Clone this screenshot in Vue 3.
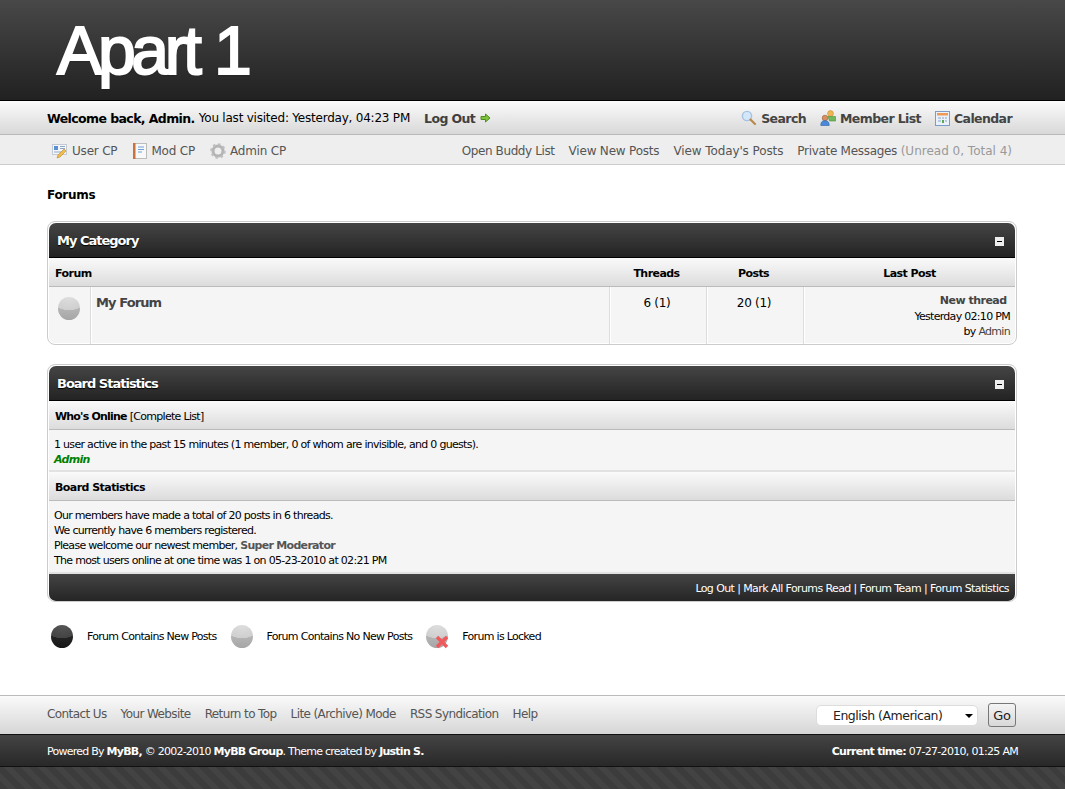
<script setup>
const footLinks = ['Contact Us', 'Your Website', 'Return to Top', 'Lite (Archive) Mode', 'RSS Syndication', 'Help']
</script>

<template>
  <div class="page">
    <header class="logo-bar"><div class="logo">Apart 1</div></header>

    <div class="welcome">
      <div class="welcome-left">
        <b class="dark">Welcome back, Admin.</b>
        <span class="visited">You last visited: Yesterday, 04:23 PM</span>
        <b class="logout">Log Out</b>
        <svg class="arrow" width="11" height="10" viewBox="0 0 11 10"><path d="M1 3.500h4.500V1L10 5 5.500 9V6.500H1z" fill="#7fc241" stroke="#4e8f1c"/></svg>
      </div>
      <div class="welcome-right">
        <span class="top-link">
          <svg width="16" height="16" viewBox="0 0 16 16"><circle cx="6" cy="6" r="4.600" fill="#d4e6fa" stroke="#a5c2e0" stroke-width="1.400"/><path d="M9.500 9.500l4.500 4.500" stroke="#b88a4a" stroke-width="2.200" stroke-linecap="round"/></svg>
          Search
        </span>
        <span class="top-link">
          <svg width="16" height="16" viewBox="0 0 16 16"><circle cx="10.500" cy="3.500" r="2.900" fill="#f0b555" stroke="#c98a2c" stroke-width=".6"/><path d="M8 6.500h7.500v4.500H9.500z" fill="#72b85a" stroke="#4d8f3a" stroke-width=".6"/><circle cx="5" cy="8" r="2.800" fill="#d98e60" stroke="#9c5a30" stroke-width=".6"/><path d="M.8 15.500c0-3.800 1.500-4.800 4.200-4.800s4.200 1 4.200 4.800z" fill="#4a8ad8" stroke="#2e62a8" stroke-width=".6"/></svg>
          Member List
        </span>
        <span class="top-link">
          <svg width="15" height="15" viewBox="0 0 15 15"><rect x=".5" y=".5" width="14" height="14" fill="#eaf1fa" stroke="#7c9cc6"/><rect x="2" y="2" width="11" height="2.500" fill="#ef9a55"/><path d="M3 6h3v2H3zM7 6h2v2H7zM10 6h2v2h-2zM3 9h3v2H3zM10 9h2v2h-2z" fill="#b9c9de"/><path d="M7 9h2v3H7z" fill="#5aa84f"/></svg>
          Calendar
        </span>
      </div>
    </div>

    <nav class="subnav">
      <div class="subnav-left">
        <span class="sub-link">
          <svg width="16" height="16" viewBox="0 0 16 16"><rect x=".5" y="1.500" width="14" height="10" fill="#f4f6fa" stroke="#c4cad4"/><rect x="2" y="3" width="4" height="4" fill="#5a8fd0"/><path d="M8 3.500h5M8 5.500h5M2 9h8" stroke="#8fa8c8"/><path d="M5 15l1-3 6-6 2 2-6 6z" fill="#eebd4d" stroke="#c08a25" stroke-width=".6"/></svg>
          User CP
        </span>
        <span class="sub-link">
          <svg width="15" height="16" viewBox="0 0 15 16"><rect x="1.500" y=".5" width="13" height="15" fill="#f8f8f8" stroke="#bcbcbc"/><rect x="1" y="0" width="2.500" height="16" fill="#c9733a"/><path d="M6 4h6M6 6.500h6M6 9h4" stroke="#6f9fd8" stroke-width="1.200"/></svg>
          Mod CP
        </span>
        <span class="sub-link">
          <svg width="16" height="16" viewBox="0 0 16 16"><circle cx="8" cy="8" r="5" fill="none" stroke="#b4b4b4" stroke-width="3"/><circle cx="8" cy="8" r="6.800" fill="none" stroke="#c0c0c0" stroke-width="2" stroke-dasharray="2.600 2.700"/></svg>
          Admin CP
        </span>
      </div>
      <div class="subnav-right">
        <span class="buddy">Open Buddy List</span>
        <span>View New Posts</span>
        <span class="today">View Today's Posts</span>
        <span><span class="pm">Private Messages</span> <i class="muted">(Unread 0, Total 4)</i></span>
      </div>
    </nav>

    <main class="content">
      <h1 class="crumb">Forums</h1>

      <section class="panel">
        <div class="thead">
          <strong>My Category</strong>
          <span class="collapse"></span>
        </div>
        <div class="forum-grid tcat">
          <b class="f-name">Forum</b>
          <b class="shift">Threads</b>
          <b class="shift">Posts</b>
          <b>Last Post</b>
        </div>
        <div class="forum-grid row">
          <div class="f-main">
            <div class="f-icon"><span class="orb orb-off"></span></div>
            <div class="f-title">My Forum</div>
          </div>
          <div class="f-num">6 (1)</div>
          <div class="f-num">20 (1)</div>
          <div class="f-last">
            <b class="link-bold">New thread&nbsp;</b>
            <span>Yesterday 02:10 PM</span>
            <span>by <a class="link">Admin</a></span>
          </div>
        </div>
      </section>

      <section class="panel stats">
        <div class="thead">
          <strong>Board Statistics</strong>
          <span class="collapse"></span>
        </div>
        <div class="tcat tcat-left"><b class="who">Who's Online</b> <span>[Complete List]</span></div>
        <div class="tbody online">
          1 user active in the past 15 minutes (1 member, 0 of whom are invisible, and 0 guests).<br>
          <b class="admin">Admin</b>
        </div>
        <div class="tcat tcat-left"><b>Board Statistics</b></div>
        <div class="tbody board">
          Our members have made a total of 20 posts in 6 threads.<br>
          We currently have 6 members registered.<br>
          Please welcome our newest member, <b class="newest">Super Moderator</b><br>
          The most users online at one time was 1 on 05-23-2010 at 02:21 PM
        </div>
        <div class="tfoot">Log Out | Mark All Forums Read | Forum Team | Forum Statistics</div>
      </section>

      <div class="legend">
        <span class="orb orb-on"></span><span class="lg-text">Forum Contains New Posts</span>
        <span class="orb orb-off"></span><span class="lg-text">Forum Contains No New Posts</span>
        <span class="orb orb-off orb-lock">
          <svg class="cross" width="14" height="14" viewBox="0 0 14 14"><path d="M2 2l10 10M12 2L2 12" stroke="#f0595c" stroke-width="3.400"/></svg>
        </span><span class="lg-text">Forum is Locked</span>
      </div>
    </main>

    <footer>
      <div class="foot-links">
        <div class="foot-left"><span v-for="l in footLinks" :key="l">{{ l }}</span></div>
        <div class="foot-right">
          <div class="select">English (American)<span class="caret"></span></div>
          <button class="go">Go</button>
        </div>
      </div>
      <div class="copy">
        <div class="powered">Powered By <b>MyBB,</b> © 2002-2010 <b>MyBB Group</b>. Theme created by <b>Justin S.</b></div>
        <div><b>Current time:</b> 07-27-2010, 01:25 AM</div>
      </div>
      <div class="stripes"></div>
    </footer>
  </div>
</template>

<style>
html, body { margin: 0; background: #fff; }
</style>

<style scoped>
.page { height: 789px; overflow: hidden; display: flex; flex-direction: column; font-family: "DejaVu Sans", Verdana, sans-serif; font-size: 11px; color: #000; letter-spacing: -0.7px; }
.logo-bar { height: 100px; background: linear-gradient(#484848, #212121); border-bottom: 1px solid #000; padding-left: 57px; }
.logo { font-family: "Liberation Sans", Arial, sans-serif; font-size: 68px; line-height: 100px; color: #fff; letter-spacing: -4.4px; word-spacing: 2px; -webkit-text-stroke: 2px #fff; text-shadow: 0 1px 2px rgba(0,0,0,.5); }
.welcome { height: 32px; padding: 1px 53px 0 47px; background: linear-gradient(#fbfbfb, #d8d8d8); border-bottom: 1px solid #b8b8b8; display: flex; justify-content: space-between; align-items: center; font-size: 12px; }
.welcome-left { display: flex; align-items: center; }
.dark { color: #000; font-size: 12.500px; letter-spacing: -.6px; }
.visited { margin-left: 4px; letter-spacing: -.22px; }
.logout { margin-left: 14px; color: #3f3f3f; font-size: 12.500px; letter-spacing: -.6px; }
.arrow { margin-left: 5px; }
.welcome-right { display: flex; gap: 14px; }
.top-link { display: flex; align-items: center; gap: 4px; font-weight: 700; color: #444; font-size: 12.500px; letter-spacing: -.6px; }
.subnav { height: 26px; padding: 3px 53px 0 52px; background: #eee; border-bottom: 1px solid #ccc; display: flex; justify-content: space-between; align-items: center; font-size: 12px; color: #555; letter-spacing: -.2px; }
.subnav-left { display: flex; gap: 15px; }
.sub-link { display: flex; align-items: center; gap: 4px; }
.subnav-right { display: flex; gap: 14px; }
.buddy { letter-spacing: -.4px; }
.today { letter-spacing: -.1px; }
.pm { letter-spacing: -.3px; }
.muted { font-style: normal; color: #999; letter-spacing: 0; }
.content { flex: 1; padding: 0 48px 0 47px; }
.crumb { margin: 22px 0 18px; font-size: 12px; line-height: 16px; font-weight: 700; letter-spacing: -.3px; }
.panel { border: 1px solid #ccc; border-radius: 8px; overflow: hidden; background: #f5f5f5; box-shadow: inset 0 0 0 1px #fff; }
.stats { margin-top: 19px; }
.thead { height: 34px; margin: 1px 1px 0; background: linear-gradient(#454545, #232323); border-bottom: 1px solid #000; border-radius: 7px 7px 0 0; display: flex; align-items: center; justify-content: space-between; padding: 0 11px 0 8px; color: #fff; font-size: 13px; letter-spacing: -1px; text-shadow: 0 1px 1px #000; }
.collapse { width: 9px; height: 9px; background: #eee; position: relative; margin-top: 3px; }
.collapse::after { content: ""; position: absolute; left: 2px; right: 2px; top: 4px; height: 1px; background: #000; }
.forum-grid { display: grid; grid-template-columns: 561px 97px 97px 1fr; }
.tcat { height: 26px; padding-top: 2px; background: linear-gradient(#fafafa, #dcdcdc); border-bottom: 1px solid #bbb; align-items: center; margin: 0 1px; text-align: center; }
.tcat b { letter-spacing: -.55px; }
.tcat b.who { letter-spacing: -.8px; }
.tcat b.shift { padding-right: 4px; }
.f-name { text-align: left; padding-left: 6px; }
.tcat-left { display: flex; gap: 3px; padding-left: 6px; text-align: left; }
.row { height: 57px; margin: 0 1px; }
.f-main { display: flex; border-right: 1px solid #ddd; box-shadow: 1px 0 #fff; }
.f-icon { width: 42px; border-right: 1px solid #ddd; box-shadow: 1px 0 #fff; padding: 10px 0 0 9px; box-sizing: border-box; }
.f-title { padding: 8px 5px; font-size: 13px; font-weight: 700; color: #444; letter-spacing: -.9px; }
.f-num { font-size: 12px; letter-spacing: -.3px; text-align: center; padding: 9px 2px 0 0; border-right: 1px solid #ddd; box-shadow: 1px 0 #fff; }
.f-last { display: flex; flex-direction: column; align-items: flex-end; padding: 6px 5px 0 0; line-height: 15px; }
.link-bold { color: #444; letter-spacing: -.5px; margin-bottom: 1px; }
.link { color: #444; }
.tbody { background: #f5f5f5; border-bottom: 2px solid #e2e2e2; margin: 0 1px; padding: 7px 5px; line-height: 15px; }
.online { height: 27px; padding-bottom: 6px; }
.board { height: 60px; padding-bottom: 4px; }
.admin { color: #008000; font-style: italic; }
.newest { color: #555; }
.tfoot { height: 25px; padding: 2px 6px 0 0; margin: 0 1px; border-radius: 0 0 7px 7px; background: linear-gradient(#444, #252525); color: #fff; display: flex; align-items: center; justify-content: flex-end; letter-spacing: -.6px; }
.legend { display: flex; align-items: center; margin-top: 23px; padding-left: 4px; }
.orb { display: inline-block; width: 22px; height: 23px; border-radius: 50%; position: relative; flex: none; }
.orb-off { background: radial-gradient(ellipse 85% 58% at 50% 0, #dedede 0, #cfcfcf 97%, transparent 100%), linear-gradient(#c4c4c4, #a6a6a6); }
.orb-on { background: radial-gradient(ellipse 85% 58% at 50% 0, #565656 0, #444 97%, transparent 100%), linear-gradient(#333, #161616); }
.cross { position: absolute; left: 9px; top: 10px; }
.lg-text { margin: 0 14px; }
footer { display: flex; flex-direction: column; }
.foot-links { height: 38px; border-top: 1px solid #bbb; background: linear-gradient(#fafafa, #d6d6d6); border-bottom: 1px solid #111; padding: 0 49px 0 47px; display: flex; align-items: center; justify-content: space-between; font-size: 12px; color: #555; }
.foot-left { display: flex; gap: 14px; letter-spacing: -.6px; margin-top: -2px; }
.foot-right { display: flex; align-items: center; gap: 10px; }
.select { width: 162px; height: 21px; box-sizing: border-box; background: #fff; border: 1px solid #ddd; border-radius: 5px; color: #222; font-size: 12.500px; line-height: 20px; padding-left: 16px; position: relative; letter-spacing: -.5px; }
.caret { position: absolute; right: 4px; top: 8px; border: 4px solid transparent; border-top-color: #000; border-bottom: 0; }
.go { width: 28px; height: 24px; padding: 0; border: 1px solid #777; border-radius: 3px; background: linear-gradient(#f4f4f4, #d8d8d8); font: 13px "DejaVu Sans", sans-serif; color: #222; letter-spacing: -.3px; }
.copy { height: 30px; padding: 1px 47px 0; background: linear-gradient(#444, #282828); border-bottom: 1px solid #111; display: flex; align-items: center; justify-content: space-between; color: #fff; }
.powered { letter-spacing: -.75px; }
.stripes { height: 22px; background: repeating-linear-gradient(45deg, #3c3c3c 0 6px, #434343 6px 12px); }
</style>
